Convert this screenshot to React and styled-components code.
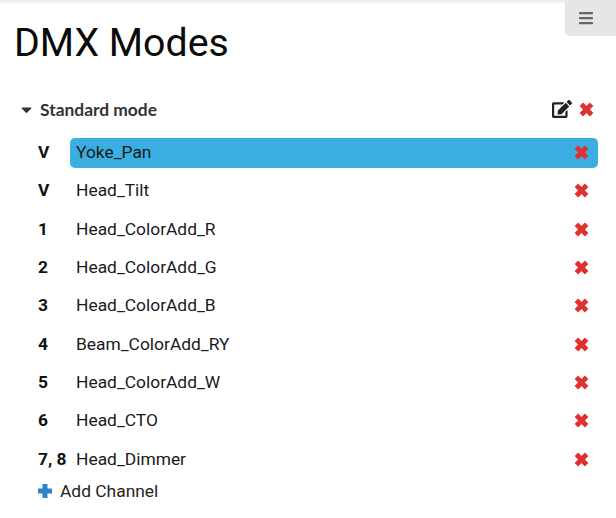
import React from 'react';
import styled, { createGlobalStyle } from 'styled-components';
import { FaBars, FaCaretDown, FaEdit } from 'react-icons/fa';

const GlobalStyle = createGlobalStyle`
  html, body {
    margin: 0;
    padding: 0;
    background: #fff;
    font-family: Roboto, "Liberation Sans", sans-serif;
    color: #111;
    overflow: hidden;
  }
`;

const Page = styled.div`
  position: relative;
  width: 616px;
  height: 518px;
  padding: 21px 18px 0 14px;
  box-sizing: border-box;
  box-shadow: inset 0 5px 5px -4px rgba(0, 0, 0, 0.14);
`;

const MenuButton = styled.button`
  position: absolute;
  top: 0;
  right: 0;
  width: 51px;
  height: 36px;
  padding: 0 10px 0 0;
  border: 0;
  border-bottom-left-radius: 5px;
  background: #e6e6e6;
  color: #666;
  display: flex;
  align-items: center;
  justify-content: center;
  font-size: 16px;
`;

const Title = styled.h1`
  margin: 0;
  font-size: 39.3px;
  line-height: 44px;
  font-weight: 400;
  color: #0a0a0a;
`;

const ModeHeader = styled.div`
  display: flex;
  align-items: center;
  height: 24px;
  margin-top: 32px;
  padding: 0 4px 0 6px;
`;

const Caret = styled(FaCaretDown)`
  font-size: 17px;
  width: 13px;
  margin-right: 7px;
  color: #333;
`;

const ModeName = styled.span`
  flex: 1;
  font-family: Lato, sans-serif;
  font-weight: 700;
  font-size: 17.4px;
  color: #333;
`;

const EditIcon = styled(FaEdit)`
  font-size: 20px;
  color: #222;
  margin-right: 7px;
`;

const CrossSvg = styled.svg`
  width: 15px;
  height: 15px;
  flex: none;
  stroke: #e03131;
  stroke-width: 4.6;
`;

const RemoveIcon = () => (
  <CrossSvg viewBox="0 0 14 14">
    <path d="M2.2 2.2L11.8 11.8M11.8 2.2L2.2 11.8" fill="none" />
  </CrossSvg>
);

const ChannelList = styled.div`
  display: flex;
  flex-direction: column;
  gap: 8.33px;
  margin-top: 17px;
  padding-left: 24px;
`;

const ChannelRow = styled.div`
  display: flex;
  align-items: center;
  height: 30px;
`;

const ChannelNumber = styled.span`
  width: 32px;
  flex: none;
  margin-bottom: 2px;
  font-weight: 700;
  font-size: 17.4px;
  white-space: nowrap;
`;

const ChannelName = styled.div`
  flex: 1;
  display: flex;
  align-items: center;
  justify-content: space-between;
  height: 30px;
  padding: 0 9.5px 1px 6px;
  box-sizing: border-box;
  border-radius: 5px;
  font-size: 17.4px;
  color: #1a1a1a;
  background: ${({ $selected }) => ($selected ? '#3aaee0' : 'transparent')};
`;

const ChannelLabel = styled.span`
  margin-bottom: 1px;
`;

const AddChannel = styled.div`
  display: flex;
  align-items: center;
  gap: 7px;
  margin-top: 4px;
  padding-left: 23px;
  font-size: 17.4px;
  line-height: 24px;
  color: #222;
`;

const PlusSvg = styled.svg`
  width: 16px;
  height: 16px;
  flex: none;
  fill: #2b83c9;
`;

const PlusIcon = () => (
  <PlusSvg viewBox="0 0 16 16">
    <path d="M6 1h4a.5.5 0 0 1 .5.5V5.5h4a.5.5 0 0 1 .5.5v4a.5.5 0 0 1-.5.5h-4v4a.5.5 0 0 1-.5.5H6a.5.5 0 0 1-.5-.5v-4h-4A.5.5 0 0 1 1 10V6a.5.5 0 0 1 .5-.5h4v-4A.5.5 0 0 1 6 1z" />
  </PlusSvg>
);

const channels = [
  { number: 'V', name: 'Yoke_Pan', selected: true },
  { number: 'V', name: 'Head_Tilt' },
  { number: '1', name: 'Head_ColorAdd_R' },
  { number: '2', name: 'Head_ColorAdd_G' },
  { number: '3', name: 'Head_ColorAdd_B' },
  { number: '4', name: 'Beam_ColorAdd_RY' },
  { number: '5', name: 'Head_ColorAdd_W' },
  { number: '6', name: 'Head_CTO' },
  { number: '7, 8', name: 'Head_Dimmer' },
];

const App = () => (
  <Page>
    <GlobalStyle />
    <MenuButton aria-label="Menu">
      <FaBars />
    </MenuButton>
    <Title>DMX Modes</Title>
    <ModeHeader>
      <Caret />
      <ModeName>Standard mode</ModeName>
      <EditIcon />
      <RemoveIcon />
    </ModeHeader>
    <ChannelList>
      {channels.map(channel => (
        <ChannelRow key={channel.name}>
          <ChannelNumber>{channel.number}</ChannelNumber>
          <ChannelName $selected={channel.selected}>
            <ChannelLabel>{channel.name}</ChannelLabel>
            <RemoveIcon />
          </ChannelName>
        </ChannelRow>
      ))}
    </ChannelList>
    <AddChannel>
      <PlusIcon />
      Add Channel
    </AddChannel>
  </Page>
);

export default App;
